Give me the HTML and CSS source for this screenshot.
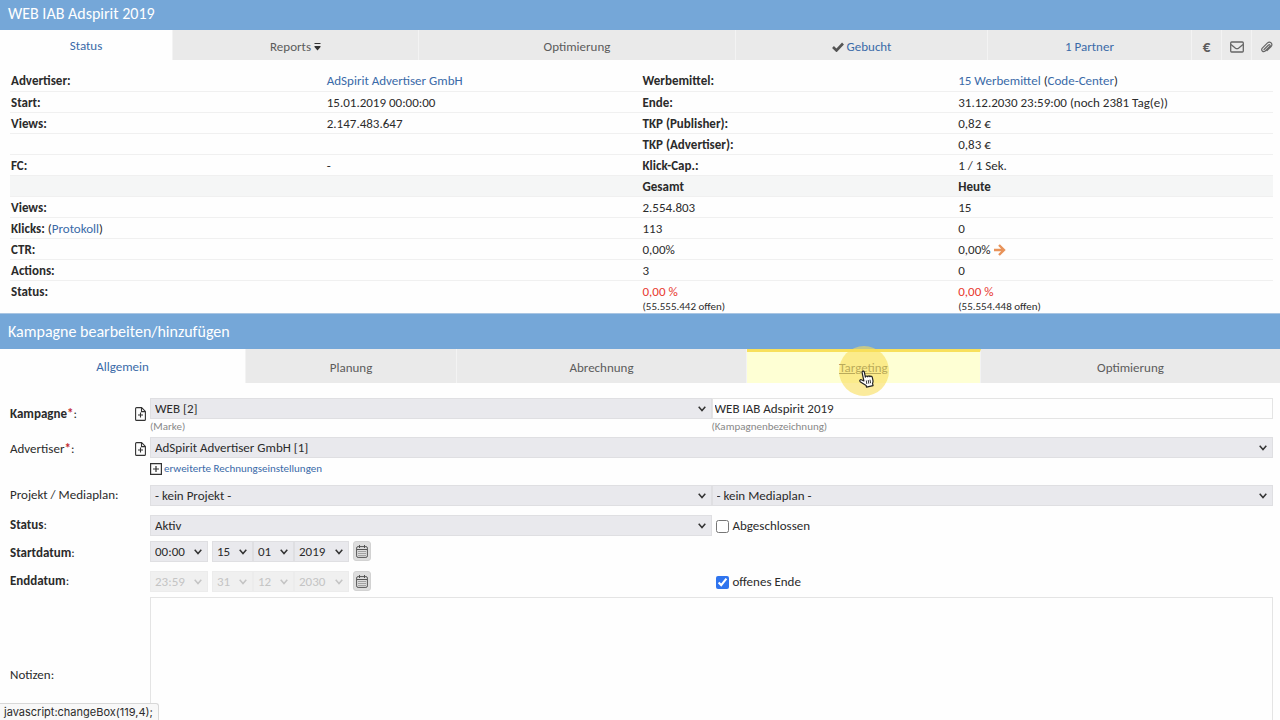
FILE: index.html
```html
<!DOCTYPE html>
<html lang="de">
<head>
    <meta charset="UTF-8">
    <meta name="viewport" content="width=device-width, initial-scale=1.0">
    <title>WEB IAB Adspirit 2019</title>
    <link rel="stylesheet" href="styles.css">
</head>
<body>
    <h1 class="bar bar-top">WEB IAB Adspirit 2019</h1>
    <nav class="tabs tabs-status">
        <a class="tab active" href="#">Status</a>
        <a class="tab" href="#">Reports
            <svg width="7" height="9" viewBox="0 0 7 9"><path d="M.5 0h6v1h-6zM.5 3h6v1L3.500 7.500.5 4z" fill="#333"/></svg>
        </a>
        <a class="tab" href="#">Optimierung</a>
        <a class="tab link" href="#">
            <svg width="12" height="10" viewBox="0 0 12 10"><path d="M1 5l3.500 3.500L11 1.500" fill="none" stroke="#555" stroke-width="2.600"/></svg>
            Gebucht</a>
        <a class="tab link" href="#">1 Partner</a>
        <a class="tab euro" href="#">€</a>
        <a class="tab" href="#" aria-label="E-Mail">
            <svg width="14" height="12" viewBox="0 0 14 12"><rect x=".7" y="1" width="12.600" height="10" rx="1" fill="none" stroke="#666" stroke-width="1.300"/><path d="M1 3.500l4.500 3.700q1.500 1 3 0L13 3.500" fill="none" stroke="#666" stroke-width="1.300"/></svg>
        </a>
        <a class="tab" href="#" aria-label="Anhang">
            <svg width="13" height="13" viewBox="0 0 13 13"><path d="M4 8.500L8.500 4q1-.8 1.500 0 .5.700-.3 1.500L5.200 10q-1.500 1.300-2.900 0-1.300-1.400 0-2.900L7.500 1.900q1.900-1.500 3.600 0 1.600 1.800 0 3.600L7 9.600" fill="none" stroke="#666" stroke-width="1.200" stroke-linecap="round"/></svg>
        </a>
    </nav>

    <table class="stats">
        <tr><th>Advertiser:</th><td><a href="#">AdSpirit Advertiser GmbH</a></td><th>Werbemittel:</th><td><a href="#">15 Werbemittel</a> (<a href="#">Code-Center</a>)</td></tr>
        <tr><th>Start:</th><td>15.01.2019 00:00:00</td><th>Ende:</th><td>31.12.2030 23:59:00 (noch 2381 Tag(e))</td></tr>
        <tr><th>Views:</th><td>2.147.483.647</td><th>TKP (Publisher):</th><td>0,82 €</td></tr>
        <tr><th></th><td></td><th>TKP (Advertiser):</th><td>0,83 €</td></tr>
        <tr><th>FC:</th><td>-</td><th>Klick-Cap.:</th><td>1 / 1 Sek.</td></tr>
        <tr class="head"><th></th><th></th><th>Gesamt</th><th>Heute</th></tr>
        <tr><th>Views:</th><td></td><td>2.554.803</td><td>15</td></tr>
        <tr><th>Klicks: <span class="normal">(<a href="#">Protokoll</a>)</span></th><td></td><td>113</td><td>0</td></tr>
        <tr><th>CTR:</th><td></td><td>0,00%</td><td>0,00%
            <svg width="12" height="12" viewBox="0 0 12 12"><path d="M0 6h10M5 1l5 5-5 5" fill="none" stroke="#e8935a" stroke-width="2.400"/></svg></td></tr>
        <tr><th>Actions:</th><td></td><td>3</td><td>0</td></tr>
        <tr class="last"><th>Status:</th><td></td>
            <td><span class="red">0,00 %</span><small>(55.555.442 offen)</small></td>
            <td><span class="red">0,00 %</span><small>(55.554.448 offen)</small></td></tr>
    </table>

    <h2 class="bar">Kampagne bearbeiten/hinzufügen</h2>
    <nav class="tabs tabs-edit">
        <a class="tab active" href="#">Allgemein</a>
        <a class="tab" href="#">Planung</a>
        <a class="tab" href="#">Abrechnung</a>
        <a class="tab hover" href="#">Targeting
            <span class="click-spot"></span>
            <svg class="cursor" width="16" height="18" viewBox="0 0 16 18"><path d="M5.500 10.500V2q0-1.300 1.100-1.300T7.800 2v5q.2-.9 1.200-.8 1 0 1.100 1 .3-.8 1.200-.6.900.1 1 1 .4-.6 1.200-.3 1 .3 1 1.400v3.300q0 1.400-1 2.600V17H6.800v-1.700L2 10.700q-1-1.200-.1-1.900.9-.6 1.900.3z" transform="rotate(-12 8 9)" fill="#fff" stroke="#222" stroke-width="1.200" stroke-linejoin="round"/><path d="M8.300 10.500l.5 3.500M10.200 10l.6 3.600M12 9.700l.6 3.500" stroke="#222" stroke-width=".9"/></svg>
        </a>
        <a class="tab" href="#">Optimierung</a>
    </nav>

    <form class="form">
        <div class="row row-campaign">
            <label class="label" for="brand"><span><b>Kampagne<i>*</i></b>:</span>
                <svg width="11" height="14" viewBox="0 0 11 14"><path d="M.6 1.600q0-1 1-1h5l3.800 3.800v8q0 1-1 1H1.600q-1 0-1-1zM6.500.6v4h4M5.500 5.500v5M3 8h5" fill="none" stroke="#333" stroke-width="1.100"/></svg>
            </label>
            <div class="pair">
                <div><select id="brand"><option>WEB [2]</option></select><span class="hint">(Marke)</span></div>
                <div><input type="text" id="name" value="WEB IAB Adspirit 2019"><label class="hint" for="name">(Kampagnenbezeichnung)</label></div>
            </div>
        </div>
        <div class="row row-advertiser">
            <label class="label" for="advertiser"><span>Advertiser<i>*</i>:</span>
                <svg width="11" height="14" viewBox="0 0 11 14"><path d="M.6 1.600q0-1 1-1h5l3.800 3.800v8q0 1-1 1H1.600q-1 0-1-1zM6.500.6v4h4M5.500 5.500v5M3 8h5" fill="none" stroke="#333" stroke-width="1.100"/></svg>
            </label>
            <div>
                <select id="advertiser"><option>AdSpirit Advertiser GmbH [1]</option></select>
                <a class="more" href="#"><svg width="12" height="12" viewBox="0 0 12 12"><path d="M.6.600h10.800v10.800H.6zM6 3v6M3 6h6" fill="none" stroke="#333" stroke-width="1.200"/></svg>erweiterte Rechnungseinstellungen</a>
            </div>
        </div>
        <div class="row row-project">
            <label class="label" for="project">Projekt / Mediaplan:</label>
            <div class="pair">
                <select id="project"><option>- kein Projekt -</option></select>
                <select aria-label="Mediaplan"><option>- kein Mediaplan -</option></select>
            </div>
        </div>
        <div class="row row-state">
            <label class="label" for="state"><span><b>Status</b>:</span></label>
            <div class="pair">
                <select id="state"><option>Aktiv</option></select>
                <label class="check"><input type="checkbox">Abgeschlossen</label>
            </div>
        </div>
        <div class="row row-start">
            <label class="label" for="start"><span><b>Startdatum</b>:</span></label>
            <div class="date">
                <select class="time" id="start"><option>00:00</option></select>
                <select class="day" aria-label="Tag"><option>15</option></select>
                <select class="day" aria-label="Monat"><option>01</option></select>
                <select class="year" aria-label="Jahr"><option>2019</option></select>
                <button type="button" aria-label="Kalender"><svg width="12" height="13" viewBox="0 0 12 13"><rect x=".6" y="1.600" width="10.800" height="10.800" rx="1.500" fill="none" stroke="#555"/><path d="M3.500 0v3M8.500 0v3M1 4.500h10" stroke="#555"/><path d="M2.500 6.500h7M2.500 8.500h7M2.500 10.500h7" stroke="#666" stroke-dasharray="1 1"/></svg></button>
            </div>
        </div>
        <div class="row row-end">
            <label class="label" for="end"><span><b>Enddatum</b>:</span></label>
            <div class="pair">
                <div class="date">
                    <select class="time" id="end" disabled><option>23:59</option></select>
                    <select class="day" aria-label="Tag" disabled><option>31</option></select>
                    <select class="day" aria-label="Monat" disabled><option>12</option></select>
                    <select class="year" aria-label="Jahr" disabled><option>2030</option></select>
                    <button type="button" aria-label="Kalender"><svg width="12" height="13" viewBox="0 0 12 13"><rect x=".6" y="1.600" width="10.800" height="10.800" rx="1.500" fill="none" stroke="#555"/><path d="M3.500 0v3M8.500 0v3M1 4.500h10" stroke="#555"/><path d="M2.500 6.500h7M2.500 8.500h7M2.500 10.500h7" stroke="#666" stroke-dasharray="1 1"/></svg></button>
                </div>
                <label class="check"><input type="checkbox" checked>offenes Ende</label>
            </div>
        </div>
        <div class="row">
            <label class="label" for="notes">Notizen:</label>
            <textarea id="notes"></textarea>
        </div>
    </form>

    <div class="status-url">javascript:changeBox(119,4);</div>
</body>
</html>
```

FILE: styles.css
```css
* {
    box-sizing: border-box;
}
html {
    scrollbar-width: none;
}
body {
    margin: 0;
    background: #fefefe;
    color: #2b2b2b;
    font-family: Carlito, Lato, sans-serif;
    font-size: 13px;
    line-height: 20px;
}
a {
    color: #3a6aa8;
    text-decoration: none;
}
svg {
    flex: none;
}

/* title bars */
.bar {
    margin: 0;
    padding: 8px;
    background: #75a7d8;
    border-top: 1px solid #a9c5e2;
    color: #fff;
    font-size: 16px;
    font-weight: normal;
    line-height: 19px;
}
.bar-top {
    padding: 4px 8px 7px;
    border: 0;
}

/* tabs */
.tabs {
    display: grid;
}
.tabs-status {
    grid-template-columns: 173fr 246fr 317fr 252fr 204fr 30px 30px 28px;
    height: 30px;
}
.tabs-edit {
    grid-template-columns: 246fr 211fr 290fr 234fr 299fr;
    height: 34px;
}
.tab {
    display: flex;
    align-items: center;
    justify-content: center;
    gap: 3px;
    padding-top: 4px;
    background: #eaeaea;
    border-right: 1px solid #f3f3f3;
    color: #5c5c5c;
}
.tab.active {
    padding-top: 1px;
    background: #fefefe;
    color: #3a6aa8;
}
.tab.link {
    color: #3a6aa8;
}
.tab:last-child {
    border-right: 0;
}
.tab.euro {
    font-size: 15px;
    font-weight: bold;
}
.tab.hover {
    position: relative;
    padding-top: 1px;
    background: #feffd4;
    border-top: 3px solid #f8e05c;
    text-decoration: underline;
}
.click-spot {
    position: absolute;
    left: calc(50% - 25px);
    top: -6px;
    width: 50px;
    height: 50px;
    border-radius: 50%;
    background: rgba(248, 222, 90, 0.6);
}
.cursor {
    position: absolute;
    left: calc(50% - 6px);
    top: 18px;
}

/* campaign numbers */
.stats {
    width: calc(100% - 17px);
    margin: 10px 7px 0 10px;
    border-collapse: collapse;
    table-layout: fixed;
}
.stats tr {
    height: 21px;
    border-bottom: 1px solid #f0f0f0;
}
.stats th, .stats td {
    padding: 1px 1px 0;
    line-height: 19px;
    text-align: left;
    vertical-align: top;
}
.stats svg {
    vertical-align: -2px;
}
.stats .head {
    background: #f5f6f6;
}
.stats .last {
    height: 33px;
    border: 0;
}
.stats small {
    display: block;
    font-size: 11px;
    line-height: 12px;
}
.normal {
    font-weight: normal;
}
.red {
    color: #e8392f;
}

/* edit form */
.form {
    padding: 15px 7px 0 10px;
}
.row {
    display: grid;
    grid-template-columns: 140px 1fr;
}
.row-campaign {
    height: 39px;
}
.row-advertiser {
    height: 48px;
}
.row-project, .row-start {
    height: 30px;
}
.row-state, .row-end {
    height: 26px;
}
.label {
    display: flex;
    justify-content: space-between;
    align-items: center;
    padding-right: 4px;
}
.row-campaign .label {
    align-self: start;
    padding-top: 6px;
}
.row-advertiser .label, .row-start .label {
    align-self: start;
    padding-top: 2px;
}
.row-project .label, .row-state .label, .row-end .label {
    align-self: start;
}
.label i {
    color: #c0272d;
    font-weight: bold;
    font-style: normal;
}
.pair {
    display: grid;
    grid-template-columns: 1fr 1fr;
    align-items: start;
}
select, input[type="text"], textarea {
    display: block;
    width: 100%;
    height: 21px;
    margin: 0;
    padding: 0 4px;
    border: 1px solid #dfdfe2;
    border-radius: 0;
    color: #2b2b2b;
    font: inherit;
    line-height: 19px;
}
select {
    appearance: none;
    background: #e9e9ed url("data:image/svg+xml,%3Csvg xmlns='http://www.w3.org/2000/svg' width='8' height='6'%3E%3Cpath d='M.7.7L4 4.500 7.300.7' fill='none' stroke='%23333' stroke-width='1.500'/%3E%3C/svg%3E") no-repeat right 5px center;
}
select:disabled {
    opacity: 1;
    background-color: #f0f0f0;
    background-image: url("data:image/svg+xml,%3Csvg xmlns='http://www.w3.org/2000/svg' width='8' height='6'%3E%3Cpath d='M.7.7L4 4.500 7.300.7' fill='none' stroke='%23c4c4c4' stroke-width='1.500'/%3E%3C/svg%3E");
    border-color: #ececec;
    color: #c4c4c4;
}
input[type="text"] {
    padding: 0 2px;
    background: #fefefe;
    border-color: #e4e4e4;
}
.hint {
    display: block;
    color: #888;
    font-size: 11px;
    line-height: 15px;
}
.more {
    display: flex;
    align-items: center;
    gap: 2px;
    font-size: 11px;
    line-height: 22px;
}
.check {
    display: flex;
    align-items: center;
    gap: 4px;
    padding: 1px 0 0 4px;
}
.check input {
    width: 13px;
    height: 13px;
    margin: 0;
    accent-color: #2f74ee;
}
.date {
    display: flex;
}
.date .time {
    width: 58px;
    margin-right: 4px;
}
.date .day {
    width: 41px;
}
.date .year {
    width: 55px;
}
.date button {
    display: flex;
    align-items: center;
    justify-content: center;
    width: 18px;
    height: 20px;
    margin-left: 4px;
    padding: 0;
    border: 1px solid #d2d2d2;
    border-radius: 3px;
    background: #dedede;
}
textarea {
    height: 156px;
    background: #fefefe;
    border-color: #e4e4e4;
    resize: none;
}

/* link target shown by the browser */
.status-url {
    position: fixed;
    left: 0;
    bottom: 0;
    padding: 1px 5px 0 4px;
    background: #f8f8f8;
    border: 1px solid #d8d8d8;
    border-width: 1px 1px 0 0;
    border-radius: 0 3px 0 0;
    font-family: Inter, sans-serif;
    font-size: 11px;
    line-height: 15px;
}
```
